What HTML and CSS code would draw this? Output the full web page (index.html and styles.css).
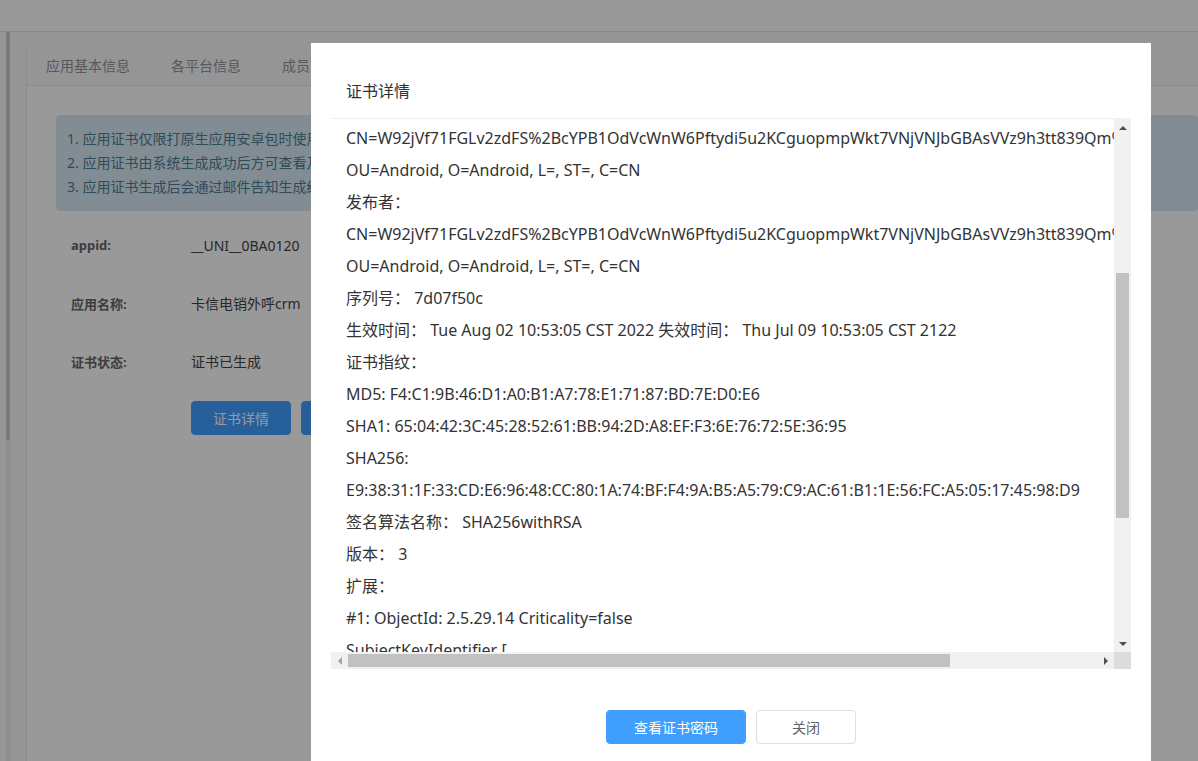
FILE: index.html
```html
<!DOCTYPE html>
<html lang="zh-CN">
<head>
    <meta charset="UTF-8">
    <title>证书详情</title>
    <link rel="stylesheet" href="styles.css">
</head>
<body>
    <div class="top_bar"></div>
    <div class="main">
        <div class="side"><div class="side_thumb"></div></div>
        <div class="content">
            <div class="card">
                <div class="tabs">
                    <span>应用基本信息</span>
                    <span>各平台信息</span>
                    <span>成员管理</span>
                    <span>安卓云端证书</span>
                </div>
                <div class="card_body">
                    <div class="tips">
                        <p>1. 应用证书仅限打原生应用安卓包时使用，请妥善保管</p>
                        <p>2. 应用证书由系统生成成功后方可查看及下载</p>
                        <p>3. 应用证书生成后会通过邮件告知生成结果</p>
                    </div>
                    <div class="form">
                        <div class="form_row">
                            <span class="form_label">appid:</span>
                            <span class="form_value">__UNI__0BA0120</span>
                        </div>
                        <div class="form_row">
                            <span class="form_label">应用名称:</span>
                            <span class="form_value">卡信电销外呼crm</span>
                        </div>
                        <div class="form_row">
                            <span class="form_label">证书状态:</span>
                            <span class="form_value">证书已生成</span>
                        </div>
                        <div class="form_btns">
                            <button class="btn btn_primary">证书详情</button>
                            <button class="btn btn_primary">下载证书</button>
                        </div>
                    </div>
                </div>
            </div>
        </div>
    </div>

    <!-- 弹窗 -->
    <div class="mask"></div>
    <div class="dialog">
        <div class="dialog_head">证书详情</div>
        <div class="viewer">
            <div class="viewer_text">
                <p>CN=W92jVf71FGLv2zdFS%2BcYPB1OdVcWnW6Pftydi5u2KCguopmpWkt7VNjVNJbGBAsVVz9h3tt839Qm%3D%3D,</p>
                <p>OU=Android, O=Android, L=, ST=, C=CN</p>
                <p>发布者：</p>
                <p>CN=W92jVf71FGLv2zdFS%2BcYPB1OdVcWnW6Pftydi5u2KCguopmpWkt7VNjVNJbGBAsVVz9h3tt839Qm%3D%3D,</p>
                <p>OU=Android, O=Android, L=, ST=, C=CN</p>
                <p>序列号： 7d07f50c</p>
                <p>生效时间： Tue Aug 02 10:53:05 CST 2022 失效时间： Thu Jul 09 10:53:05 CST 2122</p>
                <p>证书指纹：</p>
                <p>MD5: F4:C1:9B:46:D1:A0:B1:A7:78:E1:71:87:BD:7E:D0:E6</p>
                <p>SHA1: 65:04:42:3C:45:28:52:61:BB:94:2D:A8:EF:F3:6E:76:72:5E:36:95</p>
                <p>SHA256:</p>
                <p>E9:38:31:1F:33:CD:E6:96:48:CC:80:1A:74:BF:F4:9A:B5:A5:79:C9:AC:61:B1:1E:56:FC:A5:05:17:45:98:D9</p>
                <p>签名算法名称： SHA256withRSA</p>
                <p>版本： 3</p>
                <p>扩展：</p>
                <p>#1: ObjectId: 2.5.29.14 Criticality=false</p>
                <p>SubjectKeyIdentifier [</p>
                <p>KeyIdentifier [</p>
            </div>
            <div class="vbar">
                <div class="arrow arrow_up"></div>
                <div class="vbar_thumb"></div>
                <div class="bar_fill"></div>
                <div class="arrow arrow_down"></div>
            </div>
            <div class="hbar">
                <div class="arrow arrow_left"></div>
                <div class="hbar_thumb"></div>
                <div class="bar_fill"></div>
                <div class="arrow arrow_right"></div>
            </div>
            <div class="corner"></div>
        </div>
        <div class="dialog_foot">
            <button class="btn btn_primary btn_wide">查看证书密码</button>
            <button class="btn">关闭</button>
        </div>
    </div>
</body>
</html>
```
FILE: styles.css
```css
* {
    margin: 0;
    padding: 0;
    box-sizing: border-box;
}
body {
    width: 1198px;
    height: 761px;
    overflow: hidden;
    background-color: #f8f8f8;
    font-family: "Noto Sans", "Noto Sans CJK SC", sans-serif;
}
/* 背景页面 */
.top_bar {
    height: 32px;
    background-color: #fff;
    border-bottom: 1px solid #e6e6e6;
}
.main {
    display: flex;
    height: 729px;
}
.side {
    width: 26px;
    padding-left: 6px;
    background: linear-gradient(to right, #fcfcfc 6px, #eeeeee 6px 10px, #f8f8f8 10px);
}
.side_thumb {
    width: 4px;
    height: 408px;
    background-color: #cbcbcb;
}
.content {
    flex: 1;
    min-width: 0;
    padding-top: 13px;
}
.card {
    height: 100%;
    background-color: #fff;
    border-left: 1px solid #ececec;
}
.tabs {
    display: flex;
    align-items: center;
    height: 41px;
    padding-left: 19px;
    background-color: #f8f9fb;
    border-bottom: 1px solid #e4e7ed;
    font-size: 14px;
    color: #909399;
    white-space: nowrap;
}
.tabs span {
    margin-right: 41px;
}
.card_body {
    padding: 29px 0 0 29px;
}
.tips {
    padding: 12px 11px;
    background-color: #d9ebf5;
    border-radius: 4px;
    font-size: 14px;
    line-height: 24px;
    color: #4e7d99;
    white-space: nowrap;
    overflow: hidden;
}
.form {
    margin-top: 5px;
    padding-left: 15px;
}
.form_row {
    display: flex;
    align-items: center;
    height: 58px;
    font-size: 14px;
}
.form_label {
    width: 120px;
    font-size: 13px;
    font-weight: bold;
    color: #666;
}
.form_value {
    color: #444;
}
.form_btns {
    display: flex;
    gap: 10px;
    margin: 11px 0 0 120px;
}
.btn {
    width: 100px;
    height: 34px;
    border: 1px solid #dcdfe6;
    border-radius: 4px;
    background-color: #fff;
    color: #606266;
    font-family: inherit;
    font-size: 14px;
}
.btn_primary {
    background-color: #409eff;
    border-color: #409eff;
    color: #fff;
}
.btn_wide {
    width: 140px;
}
/* 遮罩和弹窗 */
.mask {
    position: fixed;
    inset: 0;
    background-color: rgba(0, 0, 0, 0.4);
}
.dialog {
    display: flex;
    position: fixed;
    left: 311px;
    top: 43px;
    flex-direction: column;
    width: 840px;
    height: 740px;
    padding: 0 20px;
    background-color: #fff;
}
.dialog_head {
    padding: 36px 15px 15px;
    border-bottom: 1px solid #f0f0f0;
    font-size: 16px;
    line-height: 24px;
    color: #303133;
}
.viewer {
    display: grid;
    grid-template-columns: 783px 17px;
    grid-template-rows: 533px 17px;
}
.viewer_text {
    overflow: hidden;
    padding: 3px 0 0 15px;
    font-size: 16px;
    line-height: 32px;
    color: #333;
}
.viewer_text p {
    white-space: pre;
}
/* 滚动条 */
.vbar, .hbar {
    display: flex;
    background-color: #f1f1f1;
}
.vbar {
    flex-direction: column;
    align-items: center;
}
.hbar {
    align-items: center;
}
.bar_fill {
    flex: 1;
}
.vbar_thumb {
    width: 13px;
    height: 245px;
    margin-top: 137px;
    background-color: #c1c1c1;
}
.hbar_thumb {
    width: 602px;
    height: 13px;
    background-color: #c1c1c1;
}
.corner {
    background-color: #dcdcdc;
}
.arrow {
    display: flex;
    flex-shrink: 0;
    align-items: center;
    justify-content: center;
    width: 17px;
    height: 17px;
}
.arrow::before {
    content: "";
    border: 4px solid transparent;
}
.arrow_up::before {
    border-top-width: 0;
    border-bottom-color: #505050;
}
.arrow_down::before {
    border-bottom-width: 0;
    border-top-color: #505050;
}
.arrow_left::before {
    border-left-width: 0;
    border-right-color: #a3a3a3;
}
.arrow_right::before {
    border-right-width: 0;
    border-left-color: #505050;
}
.dialog_foot {
    display: flex;
    justify-content: center;
    gap: 10px;
    padding-top: 41px;
}
```
